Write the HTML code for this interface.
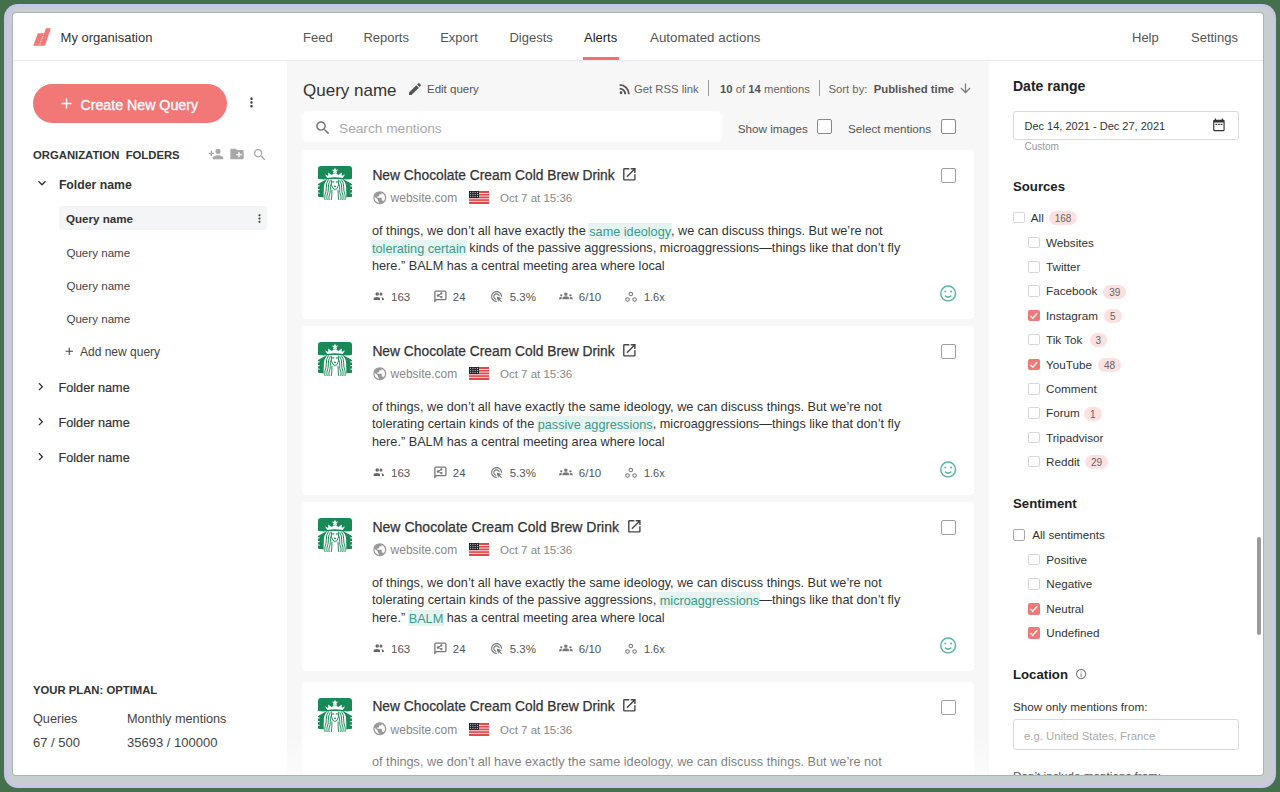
<!DOCTYPE html>
<html><head><meta charset="utf-8"><style>
html,body{margin:0;padding:0;}
body{width:1280px;height:792px;overflow:hidden;background:#44714c;font-family:"Liberation Sans", sans-serif;position:relative;}
.t{position:absolute;white-space:nowrap;}
.b{position:absolute;}
b{font-weight:700;}
</style></head><body>
<div class="b" style="left:4px;top:4px;width:1272px;height:784px;background:#c6c5e4;border-radius:14px;"></div>
<div class="b" style="left:6.5px;top:6.5px;width:1267px;height:779px;background:#cacad9;border-radius:12px;"></div>
<div class="b" style="left:9px;top:9px;width:1262px;height:773px;background:#c6cfcd;border-radius:9px;"></div>
<div class="b" style="left:12px;top:12px;width:1252px;height:764px;background:#a9b3b9;border-radius:4px;"></div>
<div class="b" style="left:13px;top:13px;width:1250px;height:762px;background:#fff;border-radius:3px;"></div>
<div class="b" style="left:13px;top:60px;width:1250px;height:1px;background:#eaecf1;"></div>
<div class="b" style="left:287px;top:61px;width:702px;height:714px;background:#f7f7f7;"></div>
<svg class="b" style="left:30px;top:26px;" width="24" height="22" viewBox="30 26 24 22"><polygon points="33.2,45.8 37.9,33.2 43.9,33.2 39.2,45.8" fill="#f27878"/><polygon points="39.9,45.8 45.9,28.2 50.9,28.2 44.9,45.8" fill="#f27878"/><polygon points="38.6,45.8 43.3,33.2 44.5,33.2 39.8,45.8" fill="#f27878"/><line x1="39.3" y1="44.6" x2="43.6" y2="34.4" stroke="#fff" stroke-width="0.7" stroke-dasharray="1.6 1"/></svg>
<div class="t" style="left:60.6px;top:29px;font-size:13px;line-height:17px;color:#333;">My organisation</div>
<div class="t" style="left:303px;top:29px;font-size:13px;line-height:17px;color:#555;">Feed</div>
<div class="t" style="left:363.4px;top:29px;font-size:13px;line-height:17px;color:#555;">Reports</div>
<div class="t" style="left:440.2px;top:29px;font-size:13px;line-height:17px;color:#555;">Export</div>
<div class="t" style="left:509.4px;top:29px;font-size:13px;line-height:17px;color:#555;">Digests</div>
<div class="t" style="left:650px;top:29px;font-size:13px;line-height:17px;color:#555;"><span style="font-size:13.35px">Automated actions</span></div>
<div class="t" style="left:1132px;top:29px;font-size:13px;line-height:17px;color:#555;">Help</div>
<div class="t" style="left:1191px;top:29px;font-size:13px;line-height:17px;color:#555;">Settings</div>
<div class="t" style="left:584px;top:29px;font-size:13px;line-height:17px;color:#222;">Alerts</div>
<div class="b" style="left:583px;top:57px;width:36px;height:3px;background:#f07070;"></div>
<div class="b" style="left:33px;top:84px;width:194px;height:39px;background:#f27878;border-radius:20px;"></div>
<svg class="b" style="left:58.2px;top:95.4px;" width="17" height="17" viewBox="0 0 24 24"><path fill="#fff" d="M19 13h-6v6h-2v-6H5v-2h6V5h2v6h6v2z"/></svg>
<div class="t" style="left:80.5px;top:96px;font-size:14.2px;line-height:19px;color:#fff;-webkit-text-stroke:0.3px #fff;">Create New Query</div>
<svg class="b" style="left:243.5px;top:94.5px;" width="15" height="15" viewBox="0 0 24 24"><path fill="#444" d="M12 8c1.1 0 2-.9 2-2s-.9-2-2-2-2 .9-2 2 .9 2 2 2zm0 2c-1.1 0-2 .9-2 2s.9 2 2 2 2-.9 2-2-.9-2-2-2zm0 6c-1.1 0-2 .9-2 2s.9 2 2 2 2-.9 2-2-.9-2-2-2z"/></svg>
<div class="t" style="left:33px;top:148px;font-size:11.3px;line-height:15px;color:#333;font-weight:700;">ORGANIZATION&nbsp; FOLDERS</div>
<svg class="b" style="left:207.6px;top:146.4px;" width="16" height="16" viewBox="0 0 24 24"><path fill="#a8a8a8" d="M15 12c2.21 0 4-1.79 4-4s-1.79-4-4-4-4 1.79-4 4 1.79 4 4 4zm-9-2V7H4v3H1v2h3v3h2v-3h3v-2H6zm9 4c-2.67 0-8 1.34-8 4v2h16v-2c0-2.66-5.33-4-8-4z"/></svg>
<svg class="b" style="left:229px;top:146px;" width="16" height="16" viewBox="0 0 24 24"><path fill="#a8a8a8" d="M20 6h-8l-2-2H4c-1.11 0-1.99.89-1.99 2L2 18c0 1.11.89 2 2 2h16c1.11 0 2-.89 2-2V8c0-1.11-.89-2-2-2zm-1 8h-3v3h-2v-3h-3v-2h3V9h2v3h3v2z"/></svg>
<svg class="b" style="left:251.5px;top:147px;" width="15.5" height="15.5" viewBox="0 0 24 24"><path fill="#a8a8a8" d="M15.5 14h-.79l-.28-.27C15.41 12.59 16 11.11 16 9.5 16 5.91 13.09 3 9.5 3S3 5.91 3 9.5 5.91 16 9.5 16c1.61 0 3.09-.59 4.23-1.57l.27.28v.79l5 4.99L20.49 19l-4.99-5zm-6 0C7.01 14 5 11.99 5 9.5S7.01 5 9.5 5 14 7.01 14 9.5 11.99 14 9.5 14z"/></svg>
<svg class="b" style="left:34px;top:175px;" width="16" height="16" viewBox="0 0 24 24"><path fill="#333" d="M16.59 8.59L12 13.17 7.41 8.59 6 10l6 6 6-6z"/></svg>
<div class="t" style="left:58.9px;top:177px;font-size:12.25px;line-height:16px;color:#333;font-weight:700;">Folder name</div>
<div class="b" style="left:59px;top:205.5px;width:208px;height:24.5px;background:#f3f5f6;border-radius:3px;"></div>
<div class="t" style="left:66px;top:211px;font-size:11.6px;line-height:16px;color:#333;font-weight:700;">Query name</div>
<svg class="b" style="left:252.5px;top:211.5px;" width="13" height="13" viewBox="0 0 24 24"><path fill="#444" d="M12 8c1.1 0 2-.9 2-2s-.9-2-2-2-2 .9-2 2 .9 2 2 2zm0 2c-1.1 0-2 .9-2 2s.9 2 2 2 2-.9 2-2-.9-2-2-2zm0 6c-1.1 0-2 .9-2 2s.9 2 2 2 2-.9 2-2-.9-2-2-2z"/></svg>
<div class="t" style="left:66.4px;top:245px;font-size:11.6px;line-height:16px;color:#444;">Query name</div>
<div class="t" style="left:66.4px;top:278px;font-size:11.6px;line-height:16px;color:#444;">Query name</div>
<div class="t" style="left:66.4px;top:311px;font-size:11.6px;line-height:16px;color:#444;">Query name</div>
<svg class="b" style="left:62.5px;top:344.5px;" width="12.5" height="12.5" viewBox="0 0 24 24"><path fill="#444" d="M19 13h-6v6h-2v-6H5v-2h6V5h2v6h6v2z"/></svg>
<div class="t" style="left:80px;top:344px;font-size:12px;line-height:16px;color:#444;">Add new query</div>
<svg class="b" style="left:33.4px;top:378.7px;" width="15.4" height="15.4" viewBox="0 0 24 24"><path fill="#333" d="M10 6L8.59 7.41 13.17 12l-4.58 4.59L10 18l6-6z"/></svg>
<div class="t" style="left:58.5px;top:380px;font-size:12.7px;line-height:17px;color:#333;-webkit-text-stroke:0.2px #333;">Folder name</div>
<svg class="b" style="left:33.4px;top:414.0px;" width="15.4" height="15.4" viewBox="0 0 24 24"><path fill="#333" d="M10 6L8.59 7.41 13.17 12l-4.58 4.59L10 18l6-6z"/></svg>
<div class="t" style="left:58.5px;top:415px;font-size:12.7px;line-height:17px;color:#333;-webkit-text-stroke:0.2px #333;">Folder name</div>
<svg class="b" style="left:33.4px;top:448.7px;" width="15.4" height="15.4" viewBox="0 0 24 24"><path fill="#333" d="M10 6L8.59 7.41 13.17 12l-4.58 4.59L10 18l6-6z"/></svg>
<div class="t" style="left:58.5px;top:450px;font-size:12.7px;line-height:17px;color:#333;-webkit-text-stroke:0.2px #333;">Folder name</div>
<div class="t" style="left:33px;top:683px;font-size:11.3px;line-height:15px;color:#333;font-weight:700;">YOUR PLAN: OPTIMAL</div>
<div class="t" style="left:33px;top:711px;font-size:12.7px;line-height:17px;color:#444;">Queries</div>
<div class="t" style="left:127px;top:711px;font-size:12.7px;line-height:17px;color:#444;">Monthly mentions</div>
<div class="t" style="left:33px;top:734px;font-size:13px;line-height:17px;color:#444;">67 / 500</div>
<div class="t" style="left:127px;top:734px;font-size:13px;line-height:17px;color:#444;">35693 / 100000</div>
<div class="t" style="left:303px;top:79px;font-size:17px;line-height:23px;color:#333;">Query name</div>
<svg class="b" style="left:407px;top:80.7px;" width="16" height="16" viewBox="0 0 24 24"><path fill="#555" d="M3 17.25V21h3.75L17.81 9.94l-3.75-3.75L3 17.25zM20.71 7.04c.39-.39.39-1.02 0-1.41l-2.34-2.34c-.39-.39-1.02-.39-1.41 0l-1.83 1.83 3.75 3.75 1.83-1.83z"/></svg>
<div class="t" style="left:427px;top:82px;font-size:11.5px;line-height:15px;color:#555;">Edit query</div>
<svg class="b" style="left:617.4px;top:80.7px;" width="15.75" height="15.75" viewBox="0 0 24 24"><path fill="#555" d="M6.18 15.64a2.18 2.18 0 0 1 2.18 2.18C8.36 19 7.38 20 6.18 20 5 20 4 19 4 17.82a2.18 2.18 0 0 1 2.18-2.18M4 4.44A15.56 15.56 0 0 1 19.56 20h-2.83A12.73 12.73 0 0 0 4 7.27V4.44m0 5.66a9.9 9.9 0 0 1 9.9 9.9h-2.83A7.07 7.07 0 0 0 4 12.93V10.1z"/></svg>
<div class="t" style="left:634px;top:82px;font-size:11.3px;line-height:15px;color:#666;">Get RSS link</div>
<div class="b" style="left:708px;top:80px;width:1.2px;height:16px;background:#999;"></div>
<div class="t" style="left:720px;top:82px;font-size:11.3px;line-height:15px;color:#666;"><b style="color:#555">10</b> of <b style="color:#555">14</b> mentions</div>
<div class="b" style="left:818.5px;top:80px;width:1.2px;height:16px;background:#999;"></div>
<div class="t" style="left:828.5px;top:82px;font-size:11.3px;line-height:15px;color:#666;">Sort by:&nbsp; <b style="color:#555">Published time</b></div>
<svg class="b" style="left:957.6px;top:81px;" width="15" height="15" viewBox="0 0 24 24"><path fill="#7a7a7a" d="M20 12l-1.41-1.41L13 16.17V4h-2v12.17l-5.58-5.59L4 12l8 8 8-8z"/></svg>
<div class="b" style="left:302px;top:111px;width:420px;height:31px;background:#fff;border-radius:5px;"></div>
<svg class="b" style="left:313.8px;top:118.8px;" width="17.8" height="17.8" viewBox="0 0 24 24"><path fill="#777" d="M15.5 14h-.79l-.28-.27C15.41 12.59 16 11.11 16 9.5 16 5.91 13.09 3 9.5 3S3 5.91 3 9.5 5.91 16 9.5 16c1.61 0 3.09-.59 4.23-1.57l.27.28v.79l5 4.99L20.49 19l-4.99-5zm-6 0C7.01 14 5 11.99 5 9.5S7.01 5 9.5 5 14 7.01 14 9.5 11.99 14 9.5 14z"/></svg>
<div class="t" style="left:339px;top:120px;font-size:13.7px;line-height:18px;color:#aaa;">Search mentions</div>
<div class="t" style="left:737.7px;top:121px;font-size:11.7px;line-height:16px;color:#555;">Show images</div>
<div class="b" style="left:817px;top:119px;width:15px;height:15px;box-sizing:border-box;border:1.5px solid #8a8a8a;border-radius:2px;background:#fff;"></div>
<div class="t" style="left:848px;top:121px;font-size:11.7px;line-height:16px;color:#555;">Select mentions</div>
<div class="b" style="left:941px;top:119px;width:15px;height:15px;box-sizing:border-box;border:1.5px solid #8a8a8a;border-radius:2px;background:#fff;"></div>
<div class="b" style="left:286px;top:60px;width:703px;height:715px;overflow:hidden;">
<div class="b" style="left:-286px;top:-60px;width:1280px;height:792px;">
<div class="b" style="left:302px;top:150px;width:672px;height:169px;background:#fff;border-radius:4px;"></div>
<svg class="b" style="left:318px;top:166px;" width="34" height="34" viewBox="0 0 34 34"><path fill="#178a57" d="M0 3Q0 0 3 0H31Q34 0 34 3V30.8L28.5 31.5V34H5.5V31.5L0 30.8Z"/><path fill="#fff" d="M0 12.8Q4.5 13.8 9 13.1L0 17.9Z"/><path fill="#fff" d="M34 12.8Q29.5 13.8 25 13.1L34 17.9Z"/><path fill="#fff" d="M0 30.8Q3 31.9 5.8 31.5V34H0Z"/><path fill="#fff" d="M34 30.8Q31 31.9 28.2 31.5V34H34Z"/><g fill="#fff"><rect x="0" y="19.3" width="1.6" height="1.2"/><rect x="0" y="23.1" width="1.6" height="1.1"/><rect x="0" y="26.6" width="1.6" height="1.1"/><rect x="32.4" y="19.3" width="1.6" height="1.2"/><rect x="32.4" y="23.1" width="1.6" height="1.1"/><rect x="32.4" y="26.6" width="1.6" height="1.1"/></g><path fill="#fff" d="M9.6 13.3Q6.2 16 5.9 21Q5.5 27 5.8 34H28.2Q28.5 27 28.1 21Q27.8 16 24.4 13.3Q17 12.9 9.6 13.3Z"/><polygon fill="#fff" points="17.00,1.40 17.88,3.69 20.33,3.82 18.43,5.36 19.06,7.73 17.00,6.40 14.94,7.73 15.57,5.36 13.67,3.82 16.12,3.69"/><path fill="#fff" d="M6.9 8.2L10.2 9.9L10.3 6.4L13.5 8.9L17 7L20.5 8.9L23.7 6.4L23.8 9.9L27.1 8.2L24.8 12.1Q17 10.5 9.2 12.1Z"/><g fill="none" stroke="#178a57" stroke-width="0.95"><path d="M10.6 13.5Q8.1 17 8.3 21Q8.5 25 7.1 28.5Q6.5 31 7 34"/><path d="M12.2 14.3Q10.1 18 10.3 22Q10.5 26 9.1 29Q8.5 31.5 9.2 34"/><path d="M13.3 17.5Q12.1 20.5 12.3 23.5Q12.5 27 11.1 30Q10.6 32 11.2 34"/><path d="M 23.40 13.50 Q 25.90 17.00 25.70 21.00 Q 25.50 25.00 26.90 28.50 Q 27.50 31.00 27.00 34.00"/><path d="M 21.80 14.30 Q 23.90 18.00 23.70 22.00 Q 23.50 26.00 24.90 29.00 Q 25.50 31.50 24.80 34.00"/><path d="M 20.70 17.50 Q 21.90 20.50 21.70 23.50 Q 21.50 27.00 22.90 30.00 Q 23.40 32.00 22.80 34.00"/><path d="M13.3 13.6Q12.9 19.8 15 22.6Q17 24.3 19 22.6Q21.1 19.8 20.7 13.6"/><path d="M13.9 23.6Q14.1 29 13.3 34M20.1 23.6Q19.9 29 20.7 34"/></g><g fill="#178a57"><ellipse cx="15.1" cy="15.9" rx="1.3" ry="0.6"/><ellipse cx="18.9" cy="15.9" rx="1.3" ry="0.6"/><ellipse cx="17" cy="20.2" rx="1.1" ry="0.8"/></g></svg>
<div class="t" style="left:372.4px;top:167px;font-size:13.8px;line-height:18px;color:#333;-webkit-text-stroke:0.25px #333;">New Chocolate Cream Cold Brew Drink</div>
<svg class="b" style="left:620.9px;top:165.9px;" width="16.7" height="16.7" viewBox="0 0 24 24"><path fill="#444" d="M19 19H5V5h7V3H5c-1.11 0-2 .9-2 2v14c0 1.1.89 2 2 2h14c1.1 0 2-.9 2-2v-7h-2v7zM14 3v2h3.59l-9.83 9.83 1.41 1.41L19 6.41V10h2V3h-7z"/></svg>
<svg class="b" style="left:371.7px;top:189.7px;" width="15.6" height="15.6" viewBox="0 0 24 24"><path fill="#999" d="M12 2C6.48 2 2 6.48 2 12s4.48 10 10 10 10-4.48 10-10S17.52 2 12 2zm-1 17.93c-3.95-.49-7-3.85-7-7.93 0-.62.08-1.21.21-1.79L9 15v1c0 1.1.9 2 2 2v1.93zm6.9-2.54c-.26-.81-1-1.39-1.9-1.39h-1v-3c0-.55-.45-1-1-1H8v-2h2c.55 0 1-.45 1-1V7h2c1.1 0 2-.9 2-2v-.41c2.93 1.19 5 4.06 5 7.41 0 2.08-.8 3.97-2.1 5.39z"/></svg>
<div class="t" style="left:390.6px;top:190px;font-size:12px;line-height:16px;color:#888;">website.com</div>
<svg class="b" style="left:469px;top:191px;" width="20" height="13" viewBox="0 0 20 13"><rect x="0" y="0" width="20" height="13" fill="#e24a4a"/><rect x="0" y="2.0" width="20" height="0.9" fill="#fbe9e9"/><rect x="0" y="4.6" width="20" height="0.9" fill="#fbe9e9"/><rect x="0" y="7.3" width="20" height="0.9" fill="#fbe9e9"/><rect x="0" y="9.9" width="20" height="0.9" fill="#fbe9e9"/><rect x="0" y="0" width="10" height="7" fill="#24242c"/><rect x="1.1" y="0.9" width="1" height="1" fill="#cfcfcf"/><rect x="3.4" y="0.9" width="1" height="1" fill="#cfcfcf"/><rect x="5.7" y="0.9" width="1" height="1" fill="#cfcfcf"/><rect x="8.0" y="0.9" width="1" height="1" fill="#cfcfcf"/><rect x="1.1" y="2.9" width="1" height="1" fill="#cfcfcf"/><rect x="3.4" y="2.9" width="1" height="1" fill="#cfcfcf"/><rect x="5.7" y="2.9" width="1" height="1" fill="#cfcfcf"/><rect x="8.0" y="2.9" width="1" height="1" fill="#cfcfcf"/><rect x="1.1" y="4.9" width="1" height="1" fill="#cfcfcf"/><rect x="3.4" y="4.9" width="1" height="1" fill="#cfcfcf"/><rect x="5.7" y="4.9" width="1" height="1" fill="#cfcfcf"/><rect x="8.0" y="4.9" width="1" height="1" fill="#cfcfcf"/></svg>
<div class="t" style="left:500px;top:191px;font-size:11.5px;line-height:15px;color:#888;">Oct 7 at 15:36</div>
<div class="b" style="left:941px;top:168px;width:15px;height:15px;box-sizing:border-box;border:1.5px solid #a0a0a0;border-radius:2px;"></div>
<div class="t" style="left:372px;top:223px;font-size:12.7px;line-height:17px;color:#333;">of things, we don’t all have exactly the <span style="background:#e5f3f1;color:#3b9b8b;padding:1.5px 1px 1px 1px;margin:0 -1px;">same ideology</span>, we can discuss things. But we’re not</div>
<div class="t" style="left:372px;top:240px;font-size:12.7px;line-height:17px;color:#333;"><span style="background:#e5f3f1;color:#3b9b8b;padding:1.5px 1px 1px 1px;margin:0 -1px;">tolerating certain</span> kinds of the passive aggressions, microaggressions—things like that don’t fly</div>
<div class="t" style="left:372px;top:258px;font-size:12.7px;line-height:17px;color:#333;">here.” BALM has a central meeting area where local</div>
<svg class="b" style="left:372px;top:292px;" width="13" height="9" viewBox="0 0 13 9"><circle cx="8.9" cy="2.06" r="1.6" fill="#6a6a6a"/><circle cx="5.2" cy="2.06" r="2.35" fill="#fff"/><circle cx="5.2" cy="2.06" r="1.75" fill="#666"/><path fill="#666" d="M1.6 7.9V6.9Q1.6 5.1 4.9 5.1Q8.1 5.1 8.1 6.9V7.9Z"/><path fill="#6a6a6a" d="M9.7 5.2Q11.9 5.6 11.9 7V7.9H10V7Q10 6 9.2 5.3Z"/></svg>
<div class="t" style="left:391px;top:290px;font-size:11.5px;line-height:15px;color:#555;">163</div>
<svg class="b" style="left:432px;top:289px;" width="15" height="14" viewBox="0 0 15 14"><path fill="none" stroke="#777" stroke-width="1.3" d="M2.9 12.2V3.4Q2.9 2.2 4.1 2.2H12.8Q13.9 2.2 13.9 3.4V9.4Q13.9 10.6 12.8 10.6H4.6Z"/><circle cx="6" cy="6.4" r="1.25" fill="#777"/><circle cx="9.3" cy="4.5" r="1.15" fill="#777"/><circle cx="9.4" cy="8.2" r="1.15" fill="#777"/><path stroke="#777" stroke-width="1" d="M6 6.4L9.3 4.5M6 6.4L9.4 8.2"/></svg>
<div class="t" style="left:452.8px;top:290px;font-size:11.5px;line-height:15px;color:#555;">24</div>
<svg class="b" style="left:490.1px;top:289.65px;" width="13.2" height="13.2" viewBox="0 0 24 24"><path fill="#777" d="M11.71 17.99C8.53 17.84 6 15.22 6 12c0-3.31 2.69-6 6-6 3.22 0 5.84 2.53 5.99 5.71l-2.1-.63C15.48 9.31 13.89 8 12 8c-2.21 0-4 1.79-4 4 0 1.89 1.31 3.48 3.08 3.89l.63 2.1zM22 12c0 .3-.01.6-.04.9l-1.97-.59c.01-.1.01-.21.01-.31 0-4.42-3.58-8-8-8s-8 3.58-8 8 3.58 8 8 8c.1 0 .21 0 .31-.01l.59 1.97c-.3.03-.6.04-.9.04-5.52 0-10-4.48-10-10S6.48 2 12 2s10 4.48 10 10zm-3.77 4.26L22 15l-10-3 3 10 1.26-3.77 4.27 4.27 1.48-1.48-4.28-4.26z"/></svg>
<div class="t" style="left:509.7px;top:290px;font-size:11.5px;line-height:15px;color:#555;">5.3%</div>
<svg class="b" style="left:559.1px;top:289.4px;" width="13.7" height="13.7" viewBox="0 0 24 24"><path fill="#777" d="M12 12.75c1.63 0 3.07.39 4.24.9 1.08.48 1.76 1.56 1.76 2.73V18H6v-1.61c0-1.18.68-2.26 1.76-2.73 1.17-.52 2.61-.91 4.24-.91zM4 13c1.1 0 2-.9 2-2s-.9-2-2-2-2 .9-2 2 .9 2 2 2zm1.13 1.1c-.37-.06-.74-.1-1.13-.1-.99 0-1.93.21-2.78.58C.48 14.9 0 15.62 0 16.43V18h4.5v-1.61c0-.83.23-1.61.63-2.29zM20 13c1.1 0 2-.9 2-2s-.9-2-2-2-2 .9-2 2 .9 2 2 2zm4 3.43c0-.81-.48-1.53-1.22-1.85-.85-.37-1.79-.58-2.78-.58-.39 0-.76.04-1.13.1.4.68.63 1.46.63 2.29V18H24v-1.57zM12 6c1.66 0 3 1.34 3 3s-1.34 3-3 3-3-1.34-3-3 1.34-3 3-3z"/></svg>
<div class="t" style="left:578.8px;top:290px;font-size:11.5px;line-height:15px;color:#555;">6/10</div>
<svg class="b" style="left:624px;top:290px;" width="14" height="13" viewBox="0 0 14 13"><g fill="none" stroke="#777" stroke-width="1.05"><circle cx="6.8" cy="3.9" r="1.75"/><circle cx="3.5" cy="9.4" r="1.75"/><circle cx="10.6" cy="9.4" r="1.75"/></g></svg>
<div class="t" style="left:643.9px;top:290px;font-size:11px;line-height:15px;color:#555;">1.6x</div>
<svg class="b" style="left:938px;top:283px;" width="20" height="20" viewBox="0 0 20 20"><g fill="none" stroke="#5db5a8" stroke-width="1.5"><circle cx="10.15" cy="10.45" r="7.4"/><path d="M7 12.6Q10.15 15.6 13.3 12.6"/></g><circle cx="7.3" cy="8.5" r="1.05" fill="#5db5a8"/><circle cx="13.1" cy="8.5" r="1.05" fill="#5db5a8"/></svg>
<div class="b" style="left:302px;top:326px;width:672px;height:168.5px;background:#fff;border-radius:4px;"></div>
<svg class="b" style="left:318px;top:342px;" width="34" height="34" viewBox="0 0 34 34"><path fill="#178a57" d="M0 3Q0 0 3 0H31Q34 0 34 3V30.8L28.5 31.5V34H5.5V31.5L0 30.8Z"/><path fill="#fff" d="M0 12.8Q4.5 13.8 9 13.1L0 17.9Z"/><path fill="#fff" d="M34 12.8Q29.5 13.8 25 13.1L34 17.9Z"/><path fill="#fff" d="M0 30.8Q3 31.9 5.8 31.5V34H0Z"/><path fill="#fff" d="M34 30.8Q31 31.9 28.2 31.5V34H34Z"/><g fill="#fff"><rect x="0" y="19.3" width="1.6" height="1.2"/><rect x="0" y="23.1" width="1.6" height="1.1"/><rect x="0" y="26.6" width="1.6" height="1.1"/><rect x="32.4" y="19.3" width="1.6" height="1.2"/><rect x="32.4" y="23.1" width="1.6" height="1.1"/><rect x="32.4" y="26.6" width="1.6" height="1.1"/></g><path fill="#fff" d="M9.6 13.3Q6.2 16 5.9 21Q5.5 27 5.8 34H28.2Q28.5 27 28.1 21Q27.8 16 24.4 13.3Q17 12.9 9.6 13.3Z"/><polygon fill="#fff" points="17.00,1.40 17.88,3.69 20.33,3.82 18.43,5.36 19.06,7.73 17.00,6.40 14.94,7.73 15.57,5.36 13.67,3.82 16.12,3.69"/><path fill="#fff" d="M6.9 8.2L10.2 9.9L10.3 6.4L13.5 8.9L17 7L20.5 8.9L23.7 6.4L23.8 9.9L27.1 8.2L24.8 12.1Q17 10.5 9.2 12.1Z"/><g fill="none" stroke="#178a57" stroke-width="0.95"><path d="M10.6 13.5Q8.1 17 8.3 21Q8.5 25 7.1 28.5Q6.5 31 7 34"/><path d="M12.2 14.3Q10.1 18 10.3 22Q10.5 26 9.1 29Q8.5 31.5 9.2 34"/><path d="M13.3 17.5Q12.1 20.5 12.3 23.5Q12.5 27 11.1 30Q10.6 32 11.2 34"/><path d="M 23.40 13.50 Q 25.90 17.00 25.70 21.00 Q 25.50 25.00 26.90 28.50 Q 27.50 31.00 27.00 34.00"/><path d="M 21.80 14.30 Q 23.90 18.00 23.70 22.00 Q 23.50 26.00 24.90 29.00 Q 25.50 31.50 24.80 34.00"/><path d="M 20.70 17.50 Q 21.90 20.50 21.70 23.50 Q 21.50 27.00 22.90 30.00 Q 23.40 32.00 22.80 34.00"/><path d="M13.3 13.6Q12.9 19.8 15 22.6Q17 24.3 19 22.6Q21.1 19.8 20.7 13.6"/><path d="M13.9 23.6Q14.1 29 13.3 34M20.1 23.6Q19.9 29 20.7 34"/></g><g fill="#178a57"><ellipse cx="15.1" cy="15.9" rx="1.3" ry="0.6"/><ellipse cx="18.9" cy="15.9" rx="1.3" ry="0.6"/><ellipse cx="17" cy="20.2" rx="1.1" ry="0.8"/></g></svg>
<div class="t" style="left:372.4px;top:343px;font-size:13.8px;line-height:18px;color:#333;-webkit-text-stroke:0.25px #333;">New Chocolate Cream Cold Brew Drink</div>
<svg class="b" style="left:620.9px;top:341.9px;" width="16.7" height="16.7" viewBox="0 0 24 24"><path fill="#444" d="M19 19H5V5h7V3H5c-1.11 0-2 .9-2 2v14c0 1.1.89 2 2 2h14c1.1 0 2-.9 2-2v-7h-2v7zM14 3v2h3.59l-9.83 9.83 1.41 1.41L19 6.41V10h2V3h-7z"/></svg>
<svg class="b" style="left:371.7px;top:365.7px;" width="15.6" height="15.6" viewBox="0 0 24 24"><path fill="#999" d="M12 2C6.48 2 2 6.48 2 12s4.48 10 10 10 10-4.48 10-10S17.52 2 12 2zm-1 17.93c-3.95-.49-7-3.85-7-7.93 0-.62.08-1.21.21-1.79L9 15v1c0 1.1.9 2 2 2v1.93zm6.9-2.54c-.26-.81-1-1.39-1.9-1.39h-1v-3c0-.55-.45-1-1-1H8v-2h2c.55 0 1-.45 1-1V7h2c1.1 0 2-.9 2-2v-.41c2.93 1.19 5 4.06 5 7.41 0 2.08-.8 3.97-2.1 5.39z"/></svg>
<div class="t" style="left:390.6px;top:366px;font-size:12px;line-height:16px;color:#888;">website.com</div>
<svg class="b" style="left:469px;top:367px;" width="20" height="13" viewBox="0 0 20 13"><rect x="0" y="0" width="20" height="13" fill="#e24a4a"/><rect x="0" y="2.0" width="20" height="0.9" fill="#fbe9e9"/><rect x="0" y="4.6" width="20" height="0.9" fill="#fbe9e9"/><rect x="0" y="7.3" width="20" height="0.9" fill="#fbe9e9"/><rect x="0" y="9.9" width="20" height="0.9" fill="#fbe9e9"/><rect x="0" y="0" width="10" height="7" fill="#24242c"/><rect x="1.1" y="0.9" width="1" height="1" fill="#cfcfcf"/><rect x="3.4" y="0.9" width="1" height="1" fill="#cfcfcf"/><rect x="5.7" y="0.9" width="1" height="1" fill="#cfcfcf"/><rect x="8.0" y="0.9" width="1" height="1" fill="#cfcfcf"/><rect x="1.1" y="2.9" width="1" height="1" fill="#cfcfcf"/><rect x="3.4" y="2.9" width="1" height="1" fill="#cfcfcf"/><rect x="5.7" y="2.9" width="1" height="1" fill="#cfcfcf"/><rect x="8.0" y="2.9" width="1" height="1" fill="#cfcfcf"/><rect x="1.1" y="4.9" width="1" height="1" fill="#cfcfcf"/><rect x="3.4" y="4.9" width="1" height="1" fill="#cfcfcf"/><rect x="5.7" y="4.9" width="1" height="1" fill="#cfcfcf"/><rect x="8.0" y="4.9" width="1" height="1" fill="#cfcfcf"/></svg>
<div class="t" style="left:500px;top:367px;font-size:11.5px;line-height:15px;color:#888;">Oct 7 at 15:36</div>
<div class="b" style="left:941px;top:344px;width:15px;height:15px;box-sizing:border-box;border:1.5px solid #a0a0a0;border-radius:2px;"></div>
<div class="t" style="left:372px;top:399px;font-size:12.7px;line-height:17px;color:#333;">of things, we don’t all have exactly the same ideology, we can discuss things. But we’re not</div>
<div class="t" style="left:372px;top:416px;font-size:12.7px;line-height:17px;color:#333;">tolerating certain kinds of the <span style="background:#e5f3f1;color:#3b9b8b;padding:1.5px 1px 1px 1px;margin:0 -1px;">passive aggressions</span>, microaggressions—things like that don’t fly</div>
<div class="t" style="left:372px;top:434px;font-size:12.7px;line-height:17px;color:#333;">here.” BALM has a central meeting area where local</div>
<svg class="b" style="left:372px;top:468px;" width="13" height="9" viewBox="0 0 13 9"><circle cx="8.9" cy="2.06" r="1.6" fill="#6a6a6a"/><circle cx="5.2" cy="2.06" r="2.35" fill="#fff"/><circle cx="5.2" cy="2.06" r="1.75" fill="#666"/><path fill="#666" d="M1.6 7.9V6.9Q1.6 5.1 4.9 5.1Q8.1 5.1 8.1 6.9V7.9Z"/><path fill="#6a6a6a" d="M9.7 5.2Q11.9 5.6 11.9 7V7.9H10V7Q10 6 9.2 5.3Z"/></svg>
<div class="t" style="left:391px;top:466px;font-size:11.5px;line-height:15px;color:#555;">163</div>
<svg class="b" style="left:432px;top:465px;" width="15" height="14" viewBox="0 0 15 14"><path fill="none" stroke="#777" stroke-width="1.3" d="M2.9 12.2V3.4Q2.9 2.2 4.1 2.2H12.8Q13.9 2.2 13.9 3.4V9.4Q13.9 10.6 12.8 10.6H4.6Z"/><circle cx="6" cy="6.4" r="1.25" fill="#777"/><circle cx="9.3" cy="4.5" r="1.15" fill="#777"/><circle cx="9.4" cy="8.2" r="1.15" fill="#777"/><path stroke="#777" stroke-width="1" d="M6 6.4L9.3 4.5M6 6.4L9.4 8.2"/></svg>
<div class="t" style="left:452.8px;top:466px;font-size:11.5px;line-height:15px;color:#555;">24</div>
<svg class="b" style="left:490.1px;top:465.65px;" width="13.2" height="13.2" viewBox="0 0 24 24"><path fill="#777" d="M11.71 17.99C8.53 17.84 6 15.22 6 12c0-3.31 2.69-6 6-6 3.22 0 5.84 2.53 5.99 5.71l-2.1-.63C15.48 9.31 13.89 8 12 8c-2.21 0-4 1.79-4 4 0 1.89 1.31 3.48 3.08 3.89l.63 2.1zM22 12c0 .3-.01.6-.04.9l-1.97-.59c.01-.1.01-.21.01-.31 0-4.42-3.58-8-8-8s-8 3.58-8 8 3.58 8 8 8c.1 0 .21 0 .31-.01l.59 1.97c-.3.03-.6.04-.9.04-5.52 0-10-4.48-10-10S6.48 2 12 2s10 4.48 10 10zm-3.77 4.26L22 15l-10-3 3 10 1.26-3.77 4.27 4.27 1.48-1.48-4.28-4.26z"/></svg>
<div class="t" style="left:509.7px;top:466px;font-size:11.5px;line-height:15px;color:#555;">5.3%</div>
<svg class="b" style="left:559.1px;top:465.4px;" width="13.7" height="13.7" viewBox="0 0 24 24"><path fill="#777" d="M12 12.75c1.63 0 3.07.39 4.24.9 1.08.48 1.76 1.56 1.76 2.73V18H6v-1.61c0-1.18.68-2.26 1.76-2.73 1.17-.52 2.61-.91 4.24-.91zM4 13c1.1 0 2-.9 2-2s-.9-2-2-2-2 .9-2 2 .9 2 2 2zm1.13 1.1c-.37-.06-.74-.1-1.13-.1-.99 0-1.93.21-2.78.58C.48 14.9 0 15.62 0 16.43V18h4.5v-1.61c0-.83.23-1.61.63-2.29zM20 13c1.1 0 2-.9 2-2s-.9-2-2-2-2 .9-2 2 .9 2 2 2zm4 3.43c0-.81-.48-1.53-1.22-1.85-.85-.37-1.79-.58-2.78-.58-.39 0-.76.04-1.13.1.4.68.63 1.46.63 2.29V18H24v-1.57zM12 6c1.66 0 3 1.34 3 3s-1.34 3-3 3-3-1.34-3-3 1.34-3 3-3z"/></svg>
<div class="t" style="left:578.8px;top:466px;font-size:11.5px;line-height:15px;color:#555;">6/10</div>
<svg class="b" style="left:624px;top:466px;" width="14" height="13" viewBox="0 0 14 13"><g fill="none" stroke="#777" stroke-width="1.05"><circle cx="6.8" cy="3.9" r="1.75"/><circle cx="3.5" cy="9.4" r="1.75"/><circle cx="10.6" cy="9.4" r="1.75"/></g></svg>
<div class="t" style="left:643.9px;top:466px;font-size:11px;line-height:15px;color:#555;">1.6x</div>
<svg class="b" style="left:938px;top:459px;" width="20" height="20" viewBox="0 0 20 20"><g fill="none" stroke="#5db5a8" stroke-width="1.5"><circle cx="10.15" cy="10.45" r="7.4"/><path d="M7 12.6Q10.15 15.6 13.3 12.6"/></g><circle cx="7.3" cy="8.5" r="1.05" fill="#5db5a8"/><circle cx="13.1" cy="8.5" r="1.05" fill="#5db5a8"/></svg>
<div class="b" style="left:302px;top:502px;width:672px;height:169px;background:#fff;border-radius:4px;"></div>
<svg class="b" style="left:318px;top:518px;" width="34" height="34" viewBox="0 0 34 34"><path fill="#178a57" d="M0 3Q0 0 3 0H31Q34 0 34 3V30.8L28.5 31.5V34H5.5V31.5L0 30.8Z"/><path fill="#fff" d="M0 12.8Q4.5 13.8 9 13.1L0 17.9Z"/><path fill="#fff" d="M34 12.8Q29.5 13.8 25 13.1L34 17.9Z"/><path fill="#fff" d="M0 30.8Q3 31.9 5.8 31.5V34H0Z"/><path fill="#fff" d="M34 30.8Q31 31.9 28.2 31.5V34H34Z"/><g fill="#fff"><rect x="0" y="19.3" width="1.6" height="1.2"/><rect x="0" y="23.1" width="1.6" height="1.1"/><rect x="0" y="26.6" width="1.6" height="1.1"/><rect x="32.4" y="19.3" width="1.6" height="1.2"/><rect x="32.4" y="23.1" width="1.6" height="1.1"/><rect x="32.4" y="26.6" width="1.6" height="1.1"/></g><path fill="#fff" d="M9.6 13.3Q6.2 16 5.9 21Q5.5 27 5.8 34H28.2Q28.5 27 28.1 21Q27.8 16 24.4 13.3Q17 12.9 9.6 13.3Z"/><polygon fill="#fff" points="17.00,1.40 17.88,3.69 20.33,3.82 18.43,5.36 19.06,7.73 17.00,6.40 14.94,7.73 15.57,5.36 13.67,3.82 16.12,3.69"/><path fill="#fff" d="M6.9 8.2L10.2 9.9L10.3 6.4L13.5 8.9L17 7L20.5 8.9L23.7 6.4L23.8 9.9L27.1 8.2L24.8 12.1Q17 10.5 9.2 12.1Z"/><g fill="none" stroke="#178a57" stroke-width="0.95"><path d="M10.6 13.5Q8.1 17 8.3 21Q8.5 25 7.1 28.5Q6.5 31 7 34"/><path d="M12.2 14.3Q10.1 18 10.3 22Q10.5 26 9.1 29Q8.5 31.5 9.2 34"/><path d="M13.3 17.5Q12.1 20.5 12.3 23.5Q12.5 27 11.1 30Q10.6 32 11.2 34"/><path d="M 23.40 13.50 Q 25.90 17.00 25.70 21.00 Q 25.50 25.00 26.90 28.50 Q 27.50 31.00 27.00 34.00"/><path d="M 21.80 14.30 Q 23.90 18.00 23.70 22.00 Q 23.50 26.00 24.90 29.00 Q 25.50 31.50 24.80 34.00"/><path d="M 20.70 17.50 Q 21.90 20.50 21.70 23.50 Q 21.50 27.00 22.90 30.00 Q 23.40 32.00 22.80 34.00"/><path d="M13.3 13.6Q12.9 19.8 15 22.6Q17 24.3 19 22.6Q21.1 19.8 20.7 13.6"/><path d="M13.9 23.6Q14.1 29 13.3 34M20.1 23.6Q19.9 29 20.7 34"/></g><g fill="#178a57"><ellipse cx="15.1" cy="15.9" rx="1.3" ry="0.6"/><ellipse cx="18.9" cy="15.9" rx="1.3" ry="0.6"/><ellipse cx="17" cy="20.2" rx="1.1" ry="0.8"/></g></svg>
<div class="t" style="left:372.4px;top:518px;font-size:14.05px;line-height:19px;color:#333;-webkit-text-stroke:0.25px #333;">New Chocolate Cream Cold Brew Drink</div>
<svg class="b" style="left:625.9px;top:517.9px;" width="16.7" height="16.7" viewBox="0 0 24 24"><path fill="#444" d="M19 19H5V5h7V3H5c-1.11 0-2 .9-2 2v14c0 1.1.89 2 2 2h14c1.1 0 2-.9 2-2v-7h-2v7zM14 3v2h3.59l-9.83 9.83 1.41 1.41L19 6.41V10h2V3h-7z"/></svg>
<svg class="b" style="left:371.7px;top:541.7px;" width="15.6" height="15.6" viewBox="0 0 24 24"><path fill="#999" d="M12 2C6.48 2 2 6.48 2 12s4.48 10 10 10 10-4.48 10-10S17.52 2 12 2zm-1 17.93c-3.95-.49-7-3.85-7-7.93 0-.62.08-1.21.21-1.79L9 15v1c0 1.1.9 2 2 2v1.93zm6.9-2.54c-.26-.81-1-1.39-1.9-1.39h-1v-3c0-.55-.45-1-1-1H8v-2h2c.55 0 1-.45 1-1V7h2c1.1 0 2-.9 2-2v-.41c2.93 1.19 5 4.06 5 7.41 0 2.08-.8 3.97-2.1 5.39z"/></svg>
<div class="t" style="left:390.6px;top:542px;font-size:12px;line-height:16px;color:#888;">website.com</div>
<svg class="b" style="left:469px;top:543px;" width="20" height="13" viewBox="0 0 20 13"><rect x="0" y="0" width="20" height="13" fill="#e24a4a"/><rect x="0" y="2.0" width="20" height="0.9" fill="#fbe9e9"/><rect x="0" y="4.6" width="20" height="0.9" fill="#fbe9e9"/><rect x="0" y="7.3" width="20" height="0.9" fill="#fbe9e9"/><rect x="0" y="9.9" width="20" height="0.9" fill="#fbe9e9"/><rect x="0" y="0" width="10" height="7" fill="#24242c"/><rect x="1.1" y="0.9" width="1" height="1" fill="#cfcfcf"/><rect x="3.4" y="0.9" width="1" height="1" fill="#cfcfcf"/><rect x="5.7" y="0.9" width="1" height="1" fill="#cfcfcf"/><rect x="8.0" y="0.9" width="1" height="1" fill="#cfcfcf"/><rect x="1.1" y="2.9" width="1" height="1" fill="#cfcfcf"/><rect x="3.4" y="2.9" width="1" height="1" fill="#cfcfcf"/><rect x="5.7" y="2.9" width="1" height="1" fill="#cfcfcf"/><rect x="8.0" y="2.9" width="1" height="1" fill="#cfcfcf"/><rect x="1.1" y="4.9" width="1" height="1" fill="#cfcfcf"/><rect x="3.4" y="4.9" width="1" height="1" fill="#cfcfcf"/><rect x="5.7" y="4.9" width="1" height="1" fill="#cfcfcf"/><rect x="8.0" y="4.9" width="1" height="1" fill="#cfcfcf"/></svg>
<div class="t" style="left:500px;top:543px;font-size:11.5px;line-height:15px;color:#888;">Oct 7 at 15:36</div>
<div class="b" style="left:941px;top:520px;width:15px;height:15px;box-sizing:border-box;border:1.5px solid #a0a0a0;border-radius:2px;"></div>
<div class="t" style="left:372px;top:575px;font-size:12.7px;line-height:17px;color:#333;">of things, we don’t all have exactly the same ideology, we can discuss things. But we’re not</div>
<div class="t" style="left:372px;top:592px;font-size:12.7px;line-height:17px;color:#333;">tolerating certain kinds of the passive aggressions, <span style="background:#e5f3f1;color:#3b9b8b;padding:1.5px 1px 1px 1px;margin:0 -1px;">microaggressions</span>—things like that don’t fly</div>
<div class="t" style="left:372px;top:610px;font-size:12.7px;line-height:17px;color:#333;">here.” <span style="background:#e5f3f1;color:#3b9b8b;padding:1.5px 1px 1px 1px;margin:0 -1px;">BALM</span> has a central meeting area where local</div>
<svg class="b" style="left:372px;top:644px;" width="13" height="9" viewBox="0 0 13 9"><circle cx="8.9" cy="2.06" r="1.6" fill="#6a6a6a"/><circle cx="5.2" cy="2.06" r="2.35" fill="#fff"/><circle cx="5.2" cy="2.06" r="1.75" fill="#666"/><path fill="#666" d="M1.6 7.9V6.9Q1.6 5.1 4.9 5.1Q8.1 5.1 8.1 6.9V7.9Z"/><path fill="#6a6a6a" d="M9.7 5.2Q11.9 5.6 11.9 7V7.9H10V7Q10 6 9.2 5.3Z"/></svg>
<div class="t" style="left:391px;top:642px;font-size:11.5px;line-height:15px;color:#555;">163</div>
<svg class="b" style="left:432px;top:641px;" width="15" height="14" viewBox="0 0 15 14"><path fill="none" stroke="#777" stroke-width="1.3" d="M2.9 12.2V3.4Q2.9 2.2 4.1 2.2H12.8Q13.9 2.2 13.9 3.4V9.4Q13.9 10.6 12.8 10.6H4.6Z"/><circle cx="6" cy="6.4" r="1.25" fill="#777"/><circle cx="9.3" cy="4.5" r="1.15" fill="#777"/><circle cx="9.4" cy="8.2" r="1.15" fill="#777"/><path stroke="#777" stroke-width="1" d="M6 6.4L9.3 4.5M6 6.4L9.4 8.2"/></svg>
<div class="t" style="left:452.8px;top:642px;font-size:11.5px;line-height:15px;color:#555;">24</div>
<svg class="b" style="left:490.1px;top:641.65px;" width="13.2" height="13.2" viewBox="0 0 24 24"><path fill="#777" d="M11.71 17.99C8.53 17.84 6 15.22 6 12c0-3.31 2.69-6 6-6 3.22 0 5.84 2.53 5.99 5.71l-2.1-.63C15.48 9.31 13.89 8 12 8c-2.21 0-4 1.79-4 4 0 1.89 1.31 3.48 3.08 3.89l.63 2.1zM22 12c0 .3-.01.6-.04.9l-1.97-.59c.01-.1.01-.21.01-.31 0-4.42-3.58-8-8-8s-8 3.58-8 8 3.58 8 8 8c.1 0 .21 0 .31-.01l.59 1.97c-.3.03-.6.04-.9.04-5.52 0-10-4.48-10-10S6.48 2 12 2s10 4.48 10 10zm-3.77 4.26L22 15l-10-3 3 10 1.26-3.77 4.27 4.27 1.48-1.48-4.28-4.26z"/></svg>
<div class="t" style="left:509.7px;top:642px;font-size:11.5px;line-height:15px;color:#555;">5.3%</div>
<svg class="b" style="left:559.1px;top:641.4px;" width="13.7" height="13.7" viewBox="0 0 24 24"><path fill="#777" d="M12 12.75c1.63 0 3.07.39 4.24.9 1.08.48 1.76 1.56 1.76 2.73V18H6v-1.61c0-1.18.68-2.26 1.76-2.73 1.17-.52 2.61-.91 4.24-.91zM4 13c1.1 0 2-.9 2-2s-.9-2-2-2-2 .9-2 2 .9 2 2 2zm1.13 1.1c-.37-.06-.74-.1-1.13-.1-.99 0-1.93.21-2.78.58C.48 14.9 0 15.62 0 16.43V18h4.5v-1.61c0-.83.23-1.61.63-2.29zM20 13c1.1 0 2-.9 2-2s-.9-2-2-2-2 .9-2 2 .9 2 2 2zm4 3.43c0-.81-.48-1.53-1.22-1.85-.85-.37-1.79-.58-2.78-.58-.39 0-.76.04-1.13.1.4.68.63 1.46.63 2.29V18H24v-1.57zM12 6c1.66 0 3 1.34 3 3s-1.34 3-3 3-3-1.34-3-3 1.34-3 3-3z"/></svg>
<div class="t" style="left:578.8px;top:642px;font-size:11.5px;line-height:15px;color:#555;">6/10</div>
<svg class="b" style="left:624px;top:642px;" width="14" height="13" viewBox="0 0 14 13"><g fill="none" stroke="#777" stroke-width="1.05"><circle cx="6.8" cy="3.9" r="1.75"/><circle cx="3.5" cy="9.4" r="1.75"/><circle cx="10.6" cy="9.4" r="1.75"/></g></svg>
<div class="t" style="left:643.9px;top:642px;font-size:11px;line-height:15px;color:#555;">1.6x</div>
<svg class="b" style="left:938px;top:635px;" width="20" height="20" viewBox="0 0 20 20"><g fill="none" stroke="#5db5a8" stroke-width="1.5"><circle cx="10.15" cy="10.45" r="7.4"/><path d="M7 12.6Q10.15 15.6 13.3 12.6"/></g><circle cx="7.3" cy="8.5" r="1.05" fill="#5db5a8"/><circle cx="13.1" cy="8.5" r="1.05" fill="#5db5a8"/></svg>
<div class="b" style="left:302px;top:681.5px;width:672px;height:120px;background:#fff;border-radius:4px;"></div>
<svg class="b" style="left:318px;top:697.5px;" width="34" height="34" viewBox="0 0 34 34"><path fill="#178a57" d="M0 3Q0 0 3 0H31Q34 0 34 3V30.8L28.5 31.5V34H5.5V31.5L0 30.8Z"/><path fill="#fff" d="M0 12.8Q4.5 13.8 9 13.1L0 17.9Z"/><path fill="#fff" d="M34 12.8Q29.5 13.8 25 13.1L34 17.9Z"/><path fill="#fff" d="M0 30.8Q3 31.9 5.8 31.5V34H0Z"/><path fill="#fff" d="M34 30.8Q31 31.9 28.2 31.5V34H34Z"/><g fill="#fff"><rect x="0" y="19.3" width="1.6" height="1.2"/><rect x="0" y="23.1" width="1.6" height="1.1"/><rect x="0" y="26.6" width="1.6" height="1.1"/><rect x="32.4" y="19.3" width="1.6" height="1.2"/><rect x="32.4" y="23.1" width="1.6" height="1.1"/><rect x="32.4" y="26.6" width="1.6" height="1.1"/></g><path fill="#fff" d="M9.6 13.3Q6.2 16 5.9 21Q5.5 27 5.8 34H28.2Q28.5 27 28.1 21Q27.8 16 24.4 13.3Q17 12.9 9.6 13.3Z"/><polygon fill="#fff" points="17.00,1.40 17.88,3.69 20.33,3.82 18.43,5.36 19.06,7.73 17.00,6.40 14.94,7.73 15.57,5.36 13.67,3.82 16.12,3.69"/><path fill="#fff" d="M6.9 8.2L10.2 9.9L10.3 6.4L13.5 8.9L17 7L20.5 8.9L23.7 6.4L23.8 9.9L27.1 8.2L24.8 12.1Q17 10.5 9.2 12.1Z"/><g fill="none" stroke="#178a57" stroke-width="0.95"><path d="M10.6 13.5Q8.1 17 8.3 21Q8.5 25 7.1 28.5Q6.5 31 7 34"/><path d="M12.2 14.3Q10.1 18 10.3 22Q10.5 26 9.1 29Q8.5 31.5 9.2 34"/><path d="M13.3 17.5Q12.1 20.5 12.3 23.5Q12.5 27 11.1 30Q10.6 32 11.2 34"/><path d="M 23.40 13.50 Q 25.90 17.00 25.70 21.00 Q 25.50 25.00 26.90 28.50 Q 27.50 31.00 27.00 34.00"/><path d="M 21.80 14.30 Q 23.90 18.00 23.70 22.00 Q 23.50 26.00 24.90 29.00 Q 25.50 31.50 24.80 34.00"/><path d="M 20.70 17.50 Q 21.90 20.50 21.70 23.50 Q 21.50 27.00 22.90 30.00 Q 23.40 32.00 22.80 34.00"/><path d="M13.3 13.6Q12.9 19.8 15 22.6Q17 24.3 19 22.6Q21.1 19.8 20.7 13.6"/><path d="M13.9 23.6Q14.1 29 13.3 34M20.1 23.6Q19.9 29 20.7 34"/></g><g fill="#178a57"><ellipse cx="15.1" cy="15.9" rx="1.3" ry="0.6"/><ellipse cx="18.9" cy="15.9" rx="1.3" ry="0.6"/><ellipse cx="17" cy="20.2" rx="1.1" ry="0.8"/></g></svg>
<div class="t" style="left:372.4px;top:698px;font-size:13.8px;line-height:18px;color:#333;-webkit-text-stroke:0.25px #333;">New Chocolate Cream Cold Brew Drink</div>
<svg class="b" style="left:620.9px;top:697.4px;" width="16.7" height="16.7" viewBox="0 0 24 24"><path fill="#444" d="M19 19H5V5h7V3H5c-1.11 0-2 .9-2 2v14c0 1.1.89 2 2 2h14c1.1 0 2-.9 2-2v-7h-2v7zM14 3v2h3.59l-9.83 9.83 1.41 1.41L19 6.41V10h2V3h-7z"/></svg>
<svg class="b" style="left:371.7px;top:721.2px;" width="15.6" height="15.6" viewBox="0 0 24 24"><path fill="#999" d="M12 2C6.48 2 2 6.48 2 12s4.48 10 10 10 10-4.48 10-10S17.52 2 12 2zm-1 17.93c-3.95-.49-7-3.85-7-7.93 0-.62.08-1.21.21-1.79L9 15v1c0 1.1.9 2 2 2v1.93zm6.9-2.54c-.26-.81-1-1.39-1.9-1.39h-1v-3c0-.55-.45-1-1-1H8v-2h2c.55 0 1-.45 1-1V7h2c1.1 0 2-.9 2-2v-.41c2.93 1.19 5 4.06 5 7.41 0 2.08-.8 3.97-2.1 5.39z"/></svg>
<div class="t" style="left:390.6px;top:722px;font-size:12px;line-height:16px;color:#888;">website.com</div>
<svg class="b" style="left:469px;top:722.5px;" width="20" height="13" viewBox="0 0 20 13"><rect x="0" y="0" width="20" height="13" fill="#e24a4a"/><rect x="0" y="2.0" width="20" height="0.9" fill="#fbe9e9"/><rect x="0" y="4.6" width="20" height="0.9" fill="#fbe9e9"/><rect x="0" y="7.3" width="20" height="0.9" fill="#fbe9e9"/><rect x="0" y="9.9" width="20" height="0.9" fill="#fbe9e9"/><rect x="0" y="0" width="10" height="7" fill="#24242c"/><rect x="1.1" y="0.9" width="1" height="1" fill="#cfcfcf"/><rect x="3.4" y="0.9" width="1" height="1" fill="#cfcfcf"/><rect x="5.7" y="0.9" width="1" height="1" fill="#cfcfcf"/><rect x="8.0" y="0.9" width="1" height="1" fill="#cfcfcf"/><rect x="1.1" y="2.9" width="1" height="1" fill="#cfcfcf"/><rect x="3.4" y="2.9" width="1" height="1" fill="#cfcfcf"/><rect x="5.7" y="2.9" width="1" height="1" fill="#cfcfcf"/><rect x="8.0" y="2.9" width="1" height="1" fill="#cfcfcf"/><rect x="1.1" y="4.9" width="1" height="1" fill="#cfcfcf"/><rect x="3.4" y="4.9" width="1" height="1" fill="#cfcfcf"/><rect x="5.7" y="4.9" width="1" height="1" fill="#cfcfcf"/><rect x="8.0" y="4.9" width="1" height="1" fill="#cfcfcf"/></svg>
<div class="t" style="left:500px;top:723px;font-size:11.5px;line-height:15px;color:#888;">Oct 7 at 15:36</div>
<div class="b" style="left:941px;top:699.5px;width:15px;height:15px;box-sizing:border-box;border:1.5px solid #a0a0a0;border-radius:2px;"></div>
<div class="t" style="left:372px;top:754px;font-size:12.7px;line-height:17px;color:#333;">of things, we don’t all have exactly the same ideology, we can discuss things. But we’re not</div>
<div class="t" style="left:372px;top:772px;font-size:12.7px;line-height:17px;color:#333;">tolerating certain kinds of the passive aggressions, microaggressions—things like that don’t fly</div>
<div class="t" style="left:372px;top:789px;font-size:12.7px;line-height:17px;color:#333;">here.” BALM has a central meeting area where local</div>
</div></div>
<div class="b" style="left:286px;top:735px;width:703px;height:40px;background:linear-gradient(rgba(247,247,247,0),rgba(255,255,255,0.55));"></div>
<div class="t" style="left:1013px;top:77px;font-size:14px;line-height:19px;color:#222;font-weight:700;">Date range</div>
<div class="b" style="left:1013px;top:110.5px;width:226px;height:29px;box-sizing:border-box;border:1px solid #d9d9d9;border-radius:3px;"></div>
<div class="t" style="left:1024.5px;top:119px;font-size:11px;line-height:15px;color:#333;">Dec 14, 2021 - Dec 27, 2021</div>
<svg class="b" style="left:1212.3px;top:118.2px;" width="13.8" height="13.8" viewBox="0 0 24 24"><path fill="#333" d="M20 3h-1V1h-2v2H7V1H5v2H4c-1.1 0-2 .9-2 2v16c0 1.1.9 2 2 2h16c1.1 0 2-.9 2-2V5c0-1.1-.9-2-2-2zm0 18H4V8h16v13zM6 10h3v2H6zm4.5 0h3v2h-3zm4.5 0h3v2h-3z"/></svg>
<div class="t" style="left:1024.5px;top:140px;font-size:10px;line-height:13px;color:#999;">Custom</div>
<div class="t" style="left:1013px;top:178px;font-size:13.2px;line-height:18px;color:#222;font-weight:700;">Sources</div>
<div class="b" style="left:1013px;top:211.95px;width:11.5px;height:11.5px;box-sizing:border-box;border:1px solid #d6d6d6;border-radius:2px;background:#fff;"></div>
<div class="t" style="left:1030.75px;top:210px;font-size:11.7px;line-height:16px;color:#333;">All</div>
<div class="t" style="left:1048.75px;top:211.4px;height:14px;line-height:16px;padding:0 6px;border-radius:7px;background:#fde0e0;color:#666;font-size:10px;">168</div>
<div class="b" style="left:1028.3px;top:236.65px;width:11.5px;height:11.5px;box-sizing:border-box;border:1px solid #d6d6d6;border-radius:2px;background:#fff;"></div>
<div class="t" style="left:1046px;top:235px;font-size:11.7px;line-height:16px;color:#333;">Websites</div>
<div class="b" style="left:1028.3px;top:261.25px;width:11.5px;height:11.5px;box-sizing:border-box;border:1px solid #d6d6d6;border-radius:2px;background:#fff;"></div>
<div class="t" style="left:1046px;top:259px;font-size:11.7px;line-height:16px;color:#333;">Twitter</div>
<div class="b" style="left:1028.3px;top:285.45px;width:11.5px;height:11.5px;box-sizing:border-box;border:1px solid #d6d6d6;border-radius:2px;background:#fff;"></div>
<div class="t" style="left:1046px;top:283px;font-size:11.7px;line-height:16px;color:#333;">Facebook</div>
<div class="t" style="left:1103.2px;top:284.59999999999997px;height:14px;line-height:16px;padding:0 6px;border-radius:7px;background:#fde0e0;color:#666;font-size:10px;">39</div>
<div class="b" style="left:1028.3px;top:309.85px;width:11.5px;height:11.5px;background:#f27878;border-radius:2px;"></div>
<svg class="b" style="left:1028.3px;top:309.85px;" width="11.5" height="11.5" viewBox="0 0 12 12"><path d="M2.6 6.2L5 8.6L9.6 3.4" fill="none" stroke="#fff" stroke-width="1.4"/></svg>
<div class="t" style="left:1046px;top:308px;font-size:11.7px;line-height:16px;color:#333;">Instagram</div>
<div class="t" style="left:1104px;top:309.0px;height:14px;line-height:16px;padding:0 6px;border-radius:7px;background:#fde0e0;color:#666;font-size:10px;">5</div>
<div class="b" style="left:1028.3px;top:333.95px;width:11.5px;height:11.5px;box-sizing:border-box;border:1px solid #d6d6d6;border-radius:2px;background:#fff;"></div>
<div class="t" style="left:1046px;top:332px;font-size:11.7px;line-height:16px;color:#333;">Tik Tok</div>
<div class="t" style="left:1089.5px;top:333.09999999999997px;height:14px;line-height:16px;padding:0 6px;border-radius:7px;background:#fde0e0;color:#666;font-size:10px;">3</div>
<div class="b" style="left:1028.3px;top:358.65px;width:11.5px;height:11.5px;background:#f27878;border-radius:2px;"></div>
<svg class="b" style="left:1028.3px;top:358.65px;" width="11.5" height="11.5" viewBox="0 0 12 12"><path d="M2.6 6.2L5 8.6L9.6 3.4" fill="none" stroke="#fff" stroke-width="1.4"/></svg>
<div class="t" style="left:1046px;top:357px;font-size:11.7px;line-height:16px;color:#333;">YouTube</div>
<div class="t" style="left:1098px;top:357.79999999999995px;height:14px;line-height:16px;padding:0 6px;border-radius:7px;background:#fde0e0;color:#666;font-size:10px;">48</div>
<div class="b" style="left:1028.3px;top:383.45px;width:11.5px;height:11.5px;box-sizing:border-box;border:1px solid #d6d6d6;border-radius:2px;background:#fff;"></div>
<div class="t" style="left:1046px;top:381px;font-size:11.7px;line-height:16px;color:#333;">Comment</div>
<div class="b" style="left:1028.3px;top:407.45px;width:11.5px;height:11.5px;box-sizing:border-box;border:1px solid #d6d6d6;border-radius:2px;background:#fff;"></div>
<div class="t" style="left:1046px;top:405px;font-size:11.7px;line-height:16px;color:#333;">Forum</div>
<div class="t" style="left:1084px;top:406.59999999999997px;height:14px;line-height:16px;padding:0 6px;border-radius:7px;background:#fde0e0;color:#666;font-size:10px;">1</div>
<div class="b" style="left:1028.3px;top:431.85px;width:11.5px;height:11.5px;box-sizing:border-box;border:1px solid #d6d6d6;border-radius:2px;background:#fff;"></div>
<div class="t" style="left:1046px;top:430px;font-size:11.7px;line-height:16px;color:#333;">Tripadvisor</div>
<div class="b" style="left:1028.3px;top:455.95px;width:11.5px;height:11.5px;box-sizing:border-box;border:1px solid #d6d6d6;border-radius:2px;background:#fff;"></div>
<div class="t" style="left:1046px;top:454px;font-size:11.7px;line-height:16px;color:#333;">Reddit</div>
<div class="t" style="left:1085px;top:455.09999999999997px;height:14px;line-height:16px;padding:0 6px;border-radius:7px;background:#fde0e0;color:#666;font-size:10px;">29</div>
<div class="t" style="left:1013px;top:495px;font-size:13.2px;line-height:18px;color:#222;font-weight:700;">Sentiment</div>
<div class="b" style="left:1013.3px;top:529.25px;width:11.5px;height:11.5px;box-sizing:border-box;border:1px solid #ababab;border-radius:2px;background:#fff;"></div>
<div class="t" style="left:1032.2px;top:527px;font-size:11.7px;line-height:16px;color:#333;">All sentiments</div>
<div class="b" style="left:1028.4px;top:553.85px;width:11.5px;height:11.5px;box-sizing:border-box;border:1px solid #d6d6d6;border-radius:2px;background:#fff;"></div>
<div class="t" style="left:1046.2px;top:552px;font-size:11.7px;line-height:16px;color:#333;">Positive</div>
<div class="b" style="left:1028.4px;top:578.45px;width:11.5px;height:11.5px;box-sizing:border-box;border:1px solid #d6d6d6;border-radius:2px;background:#fff;"></div>
<div class="t" style="left:1046.2px;top:576px;font-size:11.7px;line-height:16px;color:#333;">Negative</div>
<div class="b" style="left:1028.4px;top:603.15px;width:11.5px;height:11.5px;background:#f27878;border-radius:2px;"></div>
<svg class="b" style="left:1028.4px;top:603.15px;" width="11.5" height="11.5" viewBox="0 0 12 12"><path d="M2.6 6.2L5 8.6L9.6 3.4" fill="none" stroke="#fff" stroke-width="1.4"/></svg>
<div class="t" style="left:1046.2px;top:601px;font-size:11.7px;line-height:16px;color:#333;">Neutral</div>
<div class="b" style="left:1028.4px;top:627.05px;width:11.5px;height:11.5px;background:#f27878;border-radius:2px;"></div>
<svg class="b" style="left:1028.4px;top:627.05px;" width="11.5" height="11.5" viewBox="0 0 12 12"><path d="M2.6 6.2L5 8.6L9.6 3.4" fill="none" stroke="#fff" stroke-width="1.4"/></svg>
<div class="t" style="left:1046.2px;top:625px;font-size:11.7px;line-height:16px;color:#333;">Undefined</div>
<div class="t" style="left:1013px;top:666px;font-size:13.2px;line-height:18px;color:#222;font-weight:700;">Location</div>
<svg class="b" style="left:1074.8px;top:668px;" width="12.24" height="12.24" viewBox="0 0 24 24"><path fill="#777" d="M11 7h2v2h-2zm0 4h2v6h-2zm1-9C6.48 2 2 6.48 2 12s4.48 10 10 10 10-4.48 10-10S17.52 2 12 2zm0 18c-4.41 0-8-3.59-8-8s3.59-8 8-8 8 3.59 8 8-3.59 8-8 8z"/></svg>
<div class="t" style="left:1013px;top:699px;font-size:11.7px;line-height:16px;color:#333;">Show only mentions from:</div>
<div class="b" style="left:1013px;top:719px;width:226px;height:31px;box-sizing:border-box;border:1px solid #d9d9d9;border-radius:3px;"></div>
<div class="t" style="left:1024px;top:729px;font-size:11.3px;line-height:15px;color:#aaa;">e.g. United States, France</div>
<div class="b" style="left:989px;top:760px;width:274px;height:15px;overflow:hidden;">
<div class="b" style="left:-989px;top:-760px;width:1280px;height:792px;">
<div class="t" style="left:1013px;top:768px;font-size:11.7px;line-height:16px;color:#555;">Don’t include mentions from:</div>
</div></div>
<div class="b" style="left:1257px;top:537px;width:4px;height:98px;background:#9a9a9a;border-radius:2px;"></div>
</body></html>
